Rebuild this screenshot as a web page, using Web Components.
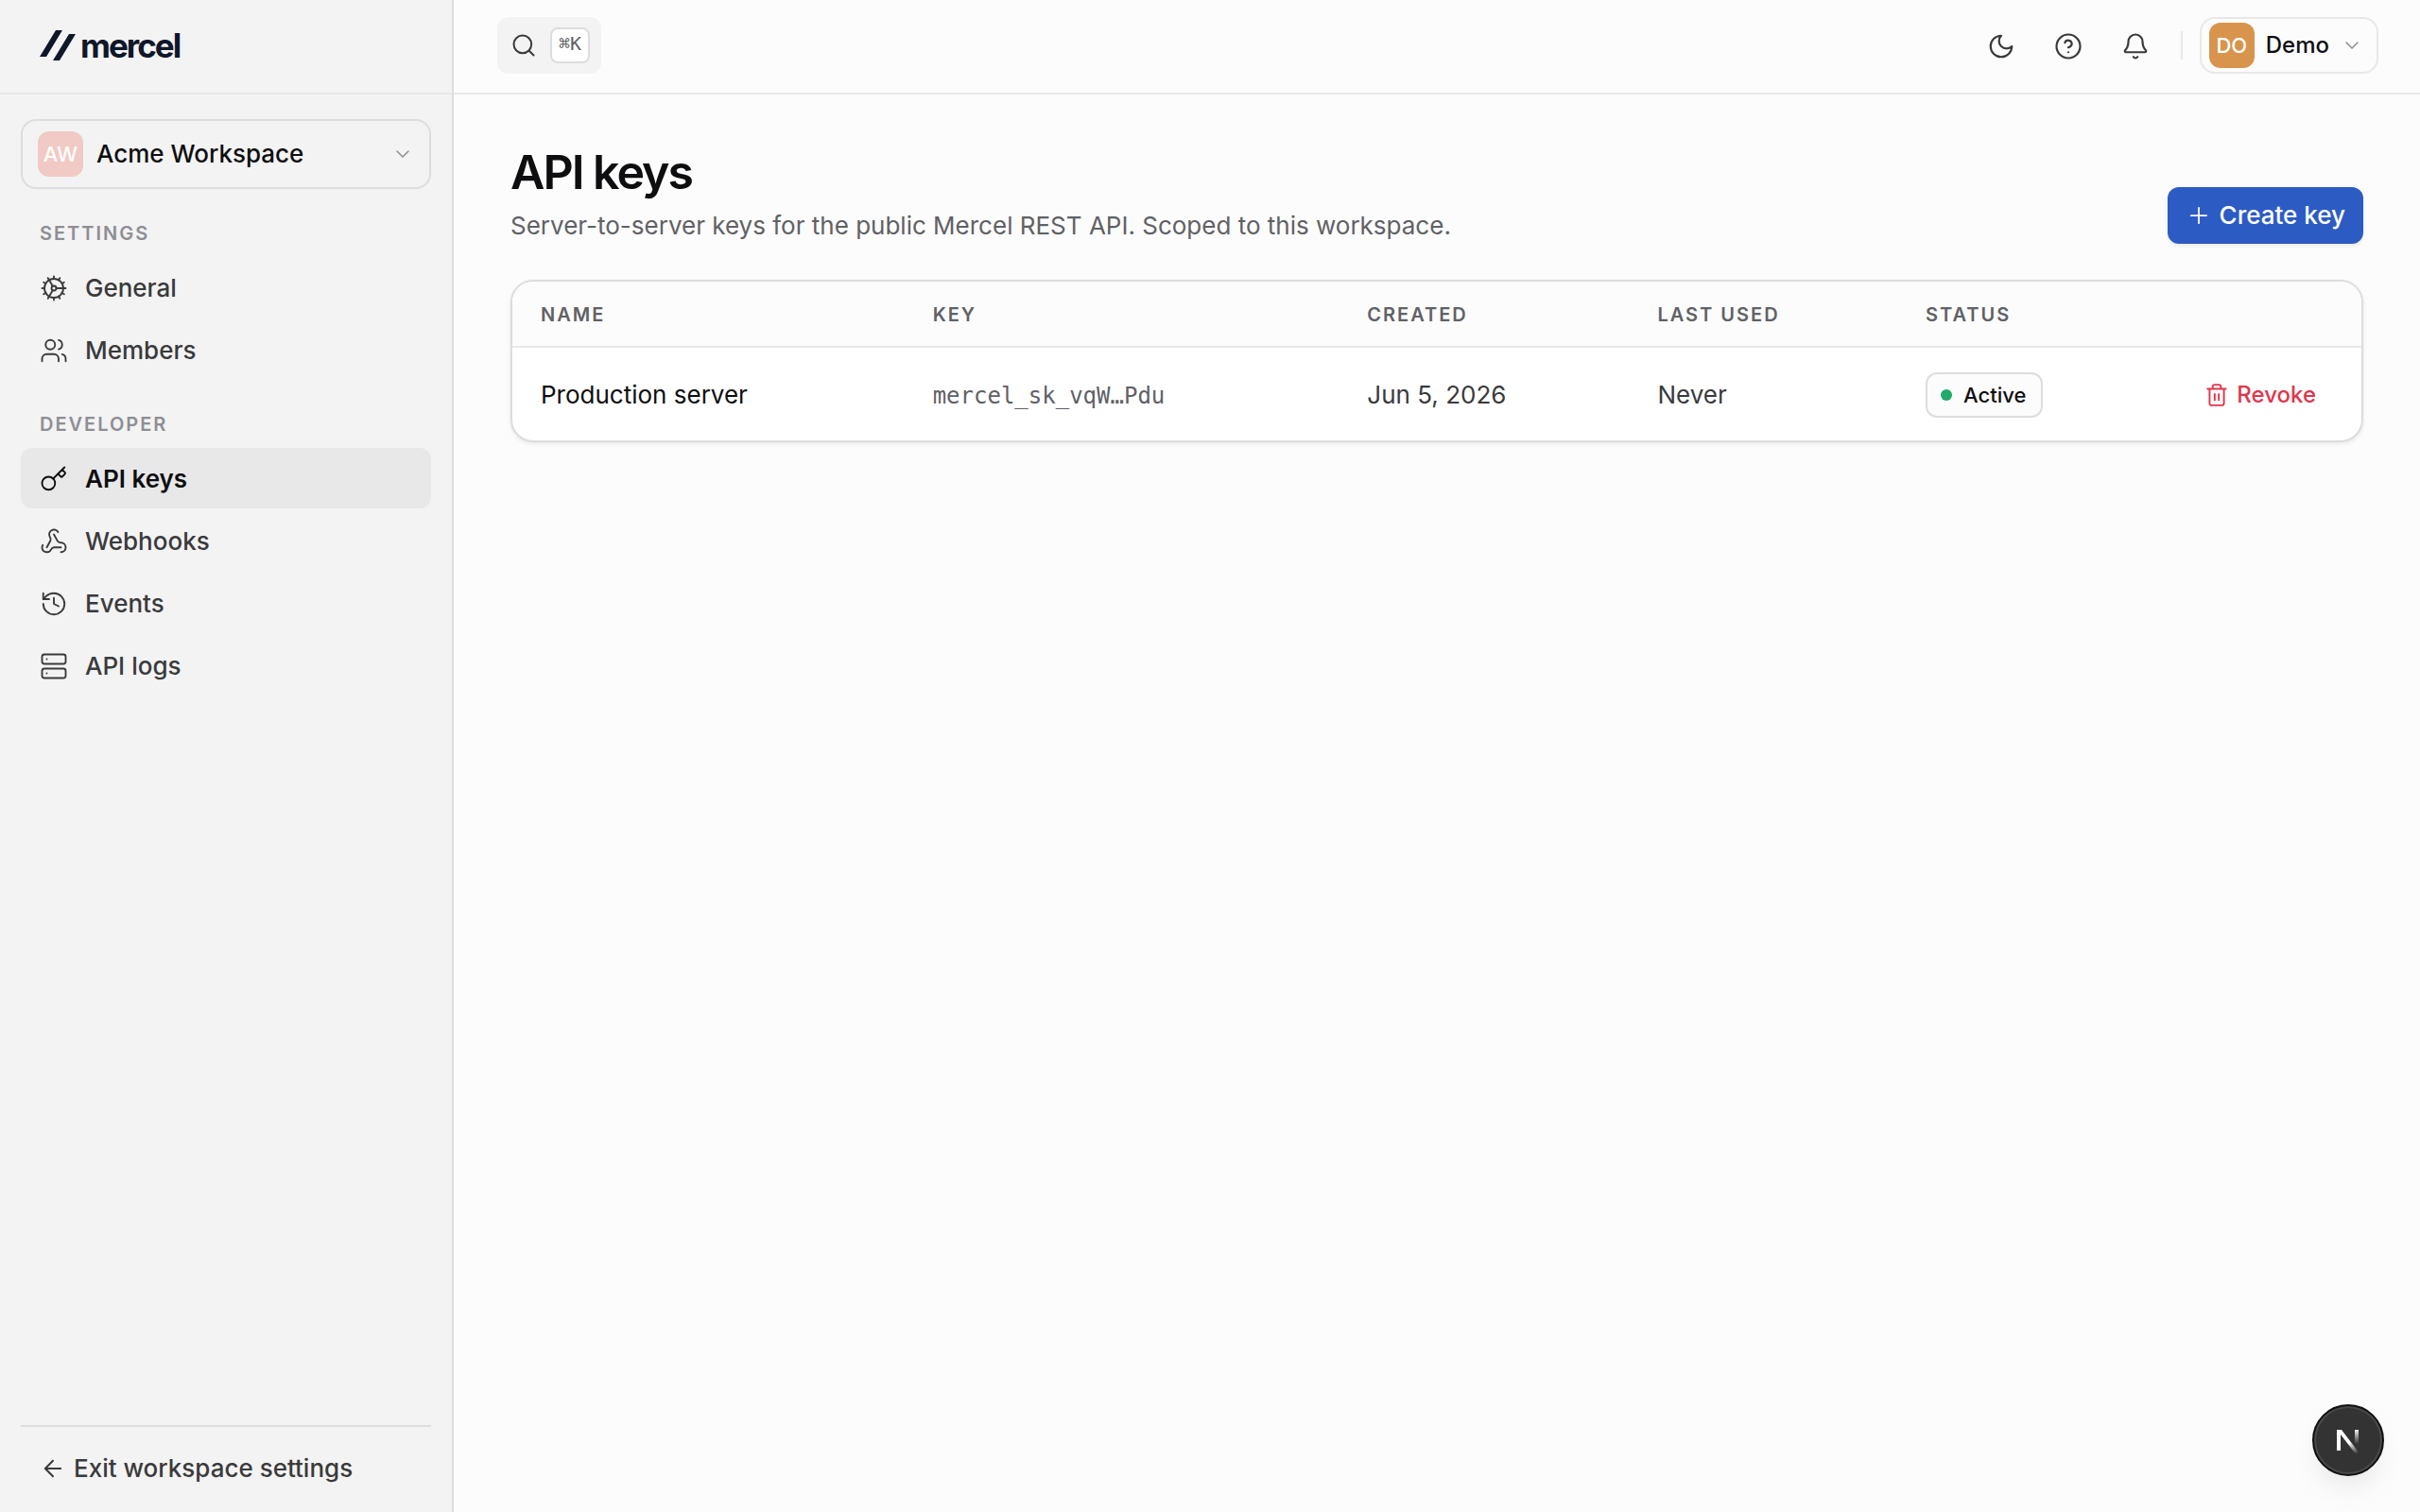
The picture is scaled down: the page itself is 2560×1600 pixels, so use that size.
<!DOCTYPE html>
<html lang="en">
<head>
<meta charset="utf-8">
<meta name="viewport" content="width=device-width, initial-scale=1">
<title>API keys - Mercel</title>
<style>
  :root {
    --bg: #fcfcfc;
    --sidebar: #f3f3f3;
    --border: #dddddd;
    --border-soft: #e8e8e8;
    --active: #e8e8e8;
    --ink: #0e0e10;
    --text: #3a3a3c;
    --muted: #606165;
    --faint: #8e8e93;
    --primary: #2d5bc4;
    --danger: #e0364c;
    --success: #22a96c;
    --mono: "DejaVu Sans Mono", monospace;
  }

  body {
    margin: 0;
    background: var(--bg);
    color: var(--text);
    font: 26px/40px Inter, sans-serif;
  }
</style>
</head>
<body>
<app-shell>
  <app-sidebar slot="sidebar">
    <app-logo slot="brand"></app-logo>
    <workspace-switcher slot="switcher" name="Acme Workspace" initials="AW"></workspace-switcher>
    <nav-group label="Settings">
      <nav-item icon="cog">General</nav-item>
      <nav-item icon="users">Members</nav-item>
    </nav-group>
    <nav-group label="Developer">
      <nav-item icon="key" active>API keys</nav-item>
      <nav-item icon="webhook">Webhooks</nav-item>
      <nav-item icon="history">Events</nav-item>
      <nav-item icon="server">API logs</nav-item>
    </nav-group>
    <nav-item slot="footer" icon="arrow-left" compact>Exit workspace settings</nav-item>
  </app-sidebar>

  <app-topbar slot="topbar"></app-topbar>

  <page-header heading="API keys">
    Server-to-server keys for the public Mercel REST API. Scoped to this workspace.
    <create-button slot="action">Create key</create-button>
  </page-header>
  <key-table></key-table>
</app-shell>
<dev-badge></dev-badge>

<script>
const ICONS = {
  cog: '<path d="M12 20a8 8 0 1 0 0-16 8 8 0 0 0 0 16Z"/><path d="M12 14a2 2 0 1 0 0-4 2 2 0 0 0 0 4Z"/><path d="M12 2v2M12 22v-2M17 20.66l-1-1.73M11 10.27 7 3.34M20.66 17l-1.73-1M3.34 7l1.73 1M14 12h8M2 12h2M20.66 7l-1.73 1M3.34 17l1.73-1M17 3.34l-1 1.73M11 13.73l-4 6.93"/>',
  users: '<path d="M16 21v-2a4 4 0 0 0-4-4H6a4 4 0 0 0-4 4v2"/><circle cx="9" cy="7" r="4"/><path d="M22 21v-2a4 4 0 0 0-3-3.87M16 3.13a4 4 0 0 1 0 7.75"/>',
  key: '<path d="m15.5 7.5 2.3 2.3a1 1 0 0 0 1.4 0l2.1-2.1a1 1 0 0 0 0-1.4L19 4M21 2l-9.6 9.6"/><circle cx="7.5" cy="15.5" r="5.5"/>',
  webhook: '<path d="M18 16.98h-5.99c-1.1 0-1.95.94-2.48 1.9A4 4 0 0 1 2 17c.01-.7.2-1.4.57-2"/><path d="m6 17 3.13-5.78c.53-.97.1-2.18-.5-3.1a4 4 0 1 1 6.89-4.06"/><path d="m12 6 3.13 5.73C15.66 12.7 16.9 13 18 13a4 4 0 0 1 0 8"/>',
  history: '<path d="M3 12a9 9 0 1 0 9-9 9.75 9.75 0 0 0-6.74 2.74L3 8"/><path d="M3 3v5h5M12 7v5l4 2"/>',
  server: '<rect width="20" height="8" x="2" y="2" rx="2"/><rect width="20" height="8" x="2" y="14" rx="2"/><path d="M6 6h.01M6 18h.01"/>',
  "arrow-left": '<path d="m12 19-7-7 7-7M19 12H5"/>',
  search: '<circle cx="11" cy="11" r="8"/><path d="m21 21-4.3-4.3"/>',
  moon: '<path d="M12 3a6 6 0 0 0 9 9 9 9 0 1 1-9-9Z"/>',
  help: '<circle cx="12" cy="12" r="10"/><path d="M9.09 9a3 3 0 0 1 5.83 1c0 2-3 3-3 3M12 17h.01"/>',
  bell: '<path d="M10.27 21a2 2 0 0 0 3.46 0"/><path d="M3.26 15.33A1 1 0 0 0 4 17h16a1 1 0 0 0 .74-1.67C19.41 13.96 18 12.5 18 8A6 6 0 0 0 6 8c0 4.5-1.41 5.96-2.74 7.33"/>',
  "chevron-down": '<path d="m6 9 6 6 6-6"/>',
  plus: '<path d="M5 12h14M12 5v14"/>',
  trash: '<path d="M3 6h18M19 6v14a2 2 0 0 1-2 2H7a2 2 0 0 1-2-2V6M8 6V4a2 2 0 0 1 2-2h4a2 2 0 0 1 2 2v2M10 11v6M14 11v6"/>'
};

function icon(name, size, stroke = 1.5) {
  return `<svg width="${size}" height="${size}" viewBox="0 0 24 24" fill="none" stroke="currentColor" stroke-width="${stroke}" stroke-linecap="round" stroke-linejoin="round" aria-hidden="true">${ICONS[name]}</svg>`;
}

// Shared by every element below
const RESET = `
  * { box-sizing: border-box; }
  svg { display: block; flex: none; }
  button { font: inherit; color: inherit; background: none; border: 0; margin: 0; padding: 0; cursor: pointer; }
  a { color: inherit; text-decoration: none; }
`;

class BaseElement extends HTMLElement {
  constructor() {
    super();
    this.attachShadow({ mode: "open" });
  }

  connectedCallback() {
    this.shadowRoot.innerHTML = `<style>${RESET}${this.styles()}</style>${this.render()}`;
  }
}

class AppShell extends BaseElement {
  styles() {
    return `
      :host {
        display: grid;
        grid-template-columns: 480px 1fr;
        min-height: 100vh;
      }
      .body { display: flex; flex-direction: column; min-width: 0; }
      main { padding: 54px 60px; }
    `;
  }

  render() {
    return `
      <slot name="sidebar"></slot>
      <div class="body">
        <slot name="topbar"></slot>
        <main><slot></slot></main>
      </div>
    `;
  }
}

class AppSidebar extends BaseElement {
  styles() {
    return `
      :host {
        display: flex;
        flex-direction: column;
        background: var(--sidebar);
        border-right: 2px solid var(--border);
      }
      header {
        display: flex;
        align-items: center;
        height: 100px;
        padding: 0 42px 2px;
        border-bottom: 2px solid var(--border-soft);
      }
      .content { flex: 1; padding: 26px 22px; }
      footer {
        margin: 0 22px;
        padding: 12px 0 14px;
        border-top: 2px solid var(--border);
      }
    `;
  }

  render() {
    return `
      <header><slot name="brand"></slot></header>
      <div class="content">
        <slot name="switcher"></slot>
        <nav aria-label="Workspace settings"><slot></slot></nav>
      </div>
      <footer><slot name="footer"></slot></footer>
    `;
  }
}

class AppLogo extends BaseElement {
  styles() {
    return `
      :host { display: block; }
      a {
        display: flex;
        align-items: center;
        gap: 5px;
        color: #0f172a;
        font-size: 35px;
        font-weight: 700;
        line-height: 40px;
        letter-spacing: -2px;
      }
    `;
  }

  render() {
    return `
      <a href="#">
        <svg width="38" height="32" viewBox="0 0 38 32" fill="currentColor" aria-hidden="true">
          <path d="M17 0h7L7 28H0zM31 4h7L21 32h-7z"/>
        </svg>
        <span>mercel</span>
      </a>
    `;
  }
}

class WorkspaceSwitcher extends BaseElement {
  styles() {
    return `
      :host { display: block; }
      button {
        display: flex;
        align-items: center;
        gap: 14px;
        width: 100%;
        height: 74px;
        padding: 0 16px;
        border: 2px solid var(--border);
        border-radius: 16px;
        color: var(--ink);
        font-weight: 500;
        text-align: left;
      }
      .avatar {
        width: 48px;
        border-radius: 12px;
        background: #f1c9c5;
        color: #ffffff;
        font-size: 22px;
        line-height: 48px;
        text-align: center;
      }
      .name { flex: 1; }
      svg { color: var(--faint); }
    `;
  }

  render() {
    return `
      <button type="button" aria-haspopup="menu">
        <span class="avatar">${this.getAttribute("initials") || ""}</span>
        <span class="name">${this.getAttribute("name") || "Workspace"}</span>
        ${icon("chevron-down", 24)}
      </button>
    `;
  }
}

class NavGroup extends BaseElement {
  styles() {
    return `
      :host { display: block; padding-top: 32px; }
      h2 {
        margin: 0 0 10px;
        padding: 0 20px;
        color: var(--faint);
        font-size: 20px;
        font-weight: 600;
        line-height: 30px;
        letter-spacing: 2px;
        text-transform: uppercase;
      }
      .items { display: flex; flex-direction: column; gap: 2px; }
    `;
  }

  render() {
    return `
      <h2>${this.getAttribute("label")}</h2>
      <div class="items"><slot></slot></div>
    `;
  }
}

class NavItem extends BaseElement {
  styles() {
    return `
      :host { display: block; font-weight: 500; }
      a {
        display: flex;
        align-items: center;
        gap: 18px;
        height: 64px;
        padding: 2px 20px 0;
        border-radius: 12px;
      }
      :host([compact]) a { gap: 8px; padding-top: 0; }
      :host([active]) a {
        background: var(--active);
        color: var(--ink);
        font-weight: 600;
      }
    `;
  }

  render() {
    const compact = this.hasAttribute("compact");
    const current = this.hasAttribute("active") ? ' aria-current="page"' : "";
    return `<a href="#"${current}>${icon(this.getAttribute("icon"), compact ? 28 : 30, compact ? 1.75 : 1.5)}<slot></slot></a>`;
  }
}

class AppTopbar extends BaseElement {
  styles() {
    return `
      :host {
        display: flex;
        align-items: center;
        justify-content: space-between;
        height: 100px;
        box-sizing: border-box;
        padding: 0 44px 2px 46px;
        border-bottom: 2px solid var(--border-soft);
      }
      .search {
        display: flex;
        align-items: center;
        gap: 14px;
        height: 60px;
        padding: 0 12px 0 14px;
        border-radius: 12px;
        background: var(--sidebar);
      }
      kbd {
        width: 42px;
        height: 38px;
        border: 2px solid var(--border);
        border-radius: 8px;
        background: #ffffff;
        color: var(--muted);
        font: 20px/30px var(--mono);
        text-align: center;
      }
      .actions { display: flex; align-items: center; gap: 11px; }
      .icon {
        display: grid;
        place-items: center;
        width: 60px;
        height: 60px;
        padding-top: 2px;
        border-radius: 12px;
      }
      .divider { width: 2px; height: 30px; margin: 0 7px; background: var(--border-soft); }
      .user {
        display: flex;
        align-items: center;
        gap: 12px;
        height: 60px;
        padding: 0 14px 0 8px;
        border: 2px solid var(--border-soft);
        border-radius: 16px;
        color: var(--ink);
        font-size: 24px;
        font-weight: 500;
      }
      .user svg { color: var(--faint); }
      .avatar {
        width: 48px;
        border-radius: 12px;
        background: #d8944d;
        color: #ffffff;
        font-size: 22px;
        line-height: 48px;
        text-align: center;
      }
    `;
  }

  render() {
    return `
      <button class="search" type="button" aria-label="Search">
        ${icon("search", 28, 1.75)}
        <kbd>⌘K</kbd>
      </button>
      <div class="actions">
        <button class="icon" type="button" aria-label="Toggle theme">${icon("moon", 30, 1.75)}</button>
        <button class="icon" type="button" aria-label="Help">${icon("help", 30, 1.75)}</button>
        <button class="icon" type="button" aria-label="Notifications">${icon("bell", 30, 1.75)}</button>
        <span class="divider"></span>
        <button class="user" type="button" aria-haspopup="menu">
          <span class="avatar">DO</span>
          <span>Demo</span>
          ${icon("chevron-down", 24)}
        </button>
      </div>
    `;
  }
}

class PageHeader extends BaseElement {
  styles() {
    return `
      :host {
        display: flex;
        align-items: flex-end;
        justify-content: space-between;
        margin-bottom: 38px;
      }
      h1 {
        margin: 0 0 10px;
        color: var(--ink);
        font-size: 50px;
        font-weight: 600;
        line-height: 56px;
        letter-spacing: -2px;
      }
      p { margin: 0; color: var(--muted); line-height: 38px; }
    `;
  }

  render() {
    return `
      <div>
        <h1>${this.getAttribute("heading")}</h1>
        <p><slot></slot></p>
      </div>
      <slot name="action"></slot>
    `;
  }
}

class CreateButton extends BaseElement {
  styles() {
    return `
      :host { display: block; }
      button {
        display: flex;
        align-items: center;
        gap: 8px;
        height: 60px;
        padding: 0 19px;
        border-radius: 12px;
        background: var(--primary);
        box-shadow: 0 2px 4px rgba(0, 0, 0, 0.08);
        color: #ffffff;
        font-weight: 500;
      }
    `;
  }

  render() {
    return `<button type="button">${icon("plus", 28)}<slot></slot></button>`;
  }
}

class StatusBadge extends BaseElement {
  styles() {
    return `
      :host {
        display: inline-flex;
        align-items: center;
        gap: 12px;
        height: 48px;
        box-sizing: border-box;
        padding: 0 16px 0 14px;
        border: 2px solid var(--border);
        border-radius: 12px;
        background: var(--bg);
        color: var(--ink);
        font-size: 22px;
        font-weight: 500;
        vertical-align: middle;
      }
      .dot { width: 12px; height: 12px; border-radius: 50%; background: var(--success); }
    `;
  }

  render() {
    return `<span class="dot"></span><slot></slot>`;
  }
}

class KeyTable extends BaseElement {
  styles() {
    return `
      :host {
        display: block;
        overflow: hidden;
        border: 2px solid var(--border);
        border-radius: 24px;
        background: #ffffff;
        box-shadow: 0 2px 4px rgba(0, 0, 0, 0.08);
      }
      table {
        width: 100%;
        table-layout: fixed;
        border-collapse: separate;
        border-spacing: 0;
        text-align: left;
      }
      .col-name { width: 21.2%; }
      .col-key { width: 23.5%; }
      .col-created { width: 15.7%; }
      .col-used { width: 14.5%; }
      .col-status { width: 12%; }
      th, td { padding: 0 30px; white-space: nowrap; }
      th {
        height: 70px;
        padding-top: 2px;
        border-bottom: 2px solid var(--border-soft);
        background: var(--bg);
        color: var(--muted);
        font-size: 20px;
        font-weight: 600;
        letter-spacing: 2px;
        text-transform: uppercase;
      }
      td { height: 98px; padding-top: 2px; }
      .name { color: var(--ink); }
      code { color: var(--muted); font: 24px/40px var(--mono); }
      .end { text-align: right; }
      .revoke {
        display: inline-flex;
        align-items: center;
        gap: 8px;
        height: 56px;
        padding: 0 18px;
        color: var(--danger);
        font-size: 24px;
        font-weight: 500;
        vertical-align: middle;
      }
    `;
  }

  render() {
    return `
      <table>
        <colgroup>
          <col class="col-name">
          <col class="col-key">
          <col class="col-created">
          <col class="col-used">
          <col class="col-status">
          <col>
        </colgroup>
        <thead>
          <tr>
            <th scope="col">Name</th>
            <th scope="col">Key</th>
            <th scope="col">Created</th>
            <th scope="col">Last used</th>
            <th scope="col">Status</th>
            <th aria-label="Actions"></th>
          </tr>
        </thead>
        <tbody>
          <tr>
            <td class="name">Production server</td>
            <td><code>mercel_sk_vqW…Pdu</code></td>
            <td>Jun 5, 2026</td>
            <td>Never</td>
            <td><status-badge>Active</status-badge></td>
            <td class="end"><button class="revoke" type="button">${icon("trash", 26, 1.75)}Revoke</button></td>
          </tr>
        </tbody>
      </table>
    `;
  }
}

class DevBadge extends BaseElement {
  styles() {
    return `
      :host { position: fixed; right: 38px; bottom: 38px; }
      button {
        display: grid;
        place-items: center;
        width: 76px;
        height: 76px;
        border: 2px solid #111111;
        border-radius: 50%;
        background: #333333;
        box-shadow: inset 0 0 0 2px #4a4a4a, 0 16px 32px -8px rgba(0, 0, 0, 0.1);
      }
    `;
  }

  render() {
    return `
      <button type="button" aria-label="Open dev tools">
        <svg width="28" height="32" viewBox="0 0 28 32" fill="none" aria-hidden="true">
          <defs>
            <linearGradient id="diag" x1="16" y1="18" x2="24" y2="30" gradientUnits="userSpaceOnUse">
              <stop stop-color="#fff"/>
              <stop offset="1" stop-color="#fff" stop-opacity="0"/>
            </linearGradient>
            <linearGradient id="stem" x1="0" y1="4" x2="0" y2="20" gradientUnits="userSpaceOnUse">
              <stop stop-color="#fff"/>
              <stop offset="1" stop-color="#fff" stop-opacity="0"/>
            </linearGradient>
          </defs>
          <path d="M2 5h5L26 30l-3 2L6 10v17H2z" fill="url(#diag)"/>
          <path d="M21 5h4v15h-4z" fill="url(#stem)"/>
        </svg>
      </button>
    `;
  }
}

customElements.define("app-shell", AppShell);
customElements.define("app-sidebar", AppSidebar);
customElements.define("app-logo", AppLogo);
customElements.define("workspace-switcher", WorkspaceSwitcher);
customElements.define("nav-group", NavGroup);
customElements.define("nav-item", NavItem);
customElements.define("app-topbar", AppTopbar);
customElements.define("page-header", PageHeader);
customElements.define("create-button", CreateButton);
customElements.define("status-badge", StatusBadge);
customElements.define("key-table", KeyTable);
customElements.define("dev-badge", DevBadge);
</script>
</body>
</html>
